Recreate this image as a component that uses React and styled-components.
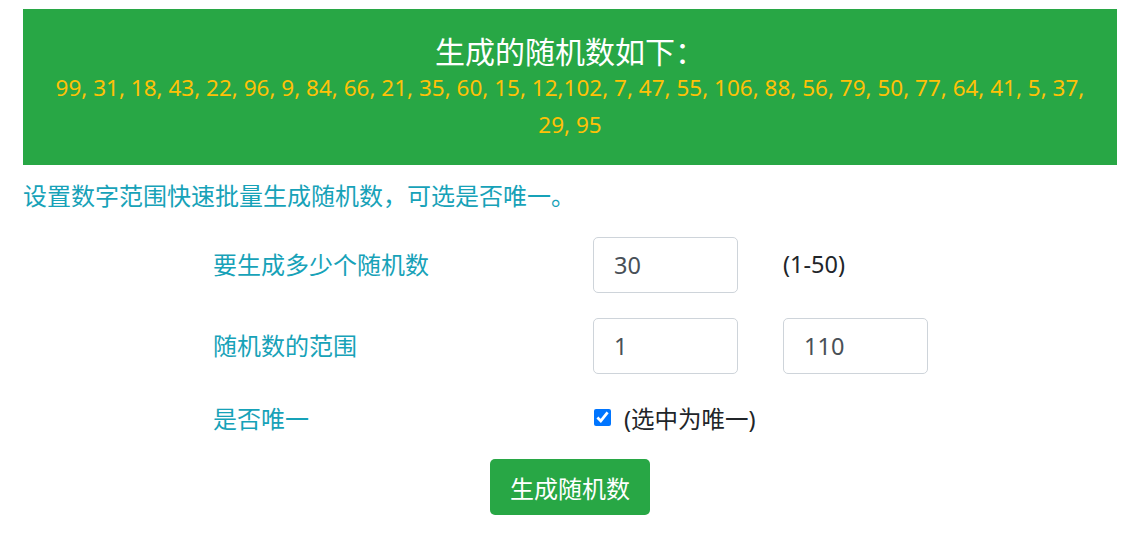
import React, { useState } from 'react';
import styled, { createGlobalStyle } from 'styled-components';

const GlobalStyle = createGlobalStyle`
  body {
    margin: 0;
    background: #fff;
    font-family: "Noto Sans", "Noto Sans CJK SC", sans-serif;
    color: #212529;
  }
`;

const Page = styled.div`
  padding: 9px 13px 20px 23px;
`;

const Banner = styled.div`
  background-color: #28a745;
  padding: 26px 30px 22px;
  text-align: center;
`;

const BannerTitle = styled.h3`
  margin: 0;
  font-size: 30px;
  font-weight: 400;
  line-height: 34px;
  color: #fff;
`;

const Numbers = styled.div`
  font-size: 22.5px;
  line-height: 37px;
  color: #ffc107;
`;

const Intro = styled.p`
  margin: 14px 0 24px;
  font-size: 24px;
  line-height: 34px;
  color: #17a2b8;
`;

const Form = styled.form`
  display: grid;
  grid-template-columns: 380px 190px 190px;
  grid-template-rows: 56px 56px 37px;
  row-gap: 25px;
  padding-left: 190px;
  align-items: center;
`;

const Label = styled.label`
  font-size: 24px;
  line-height: 34px;
  color: #17a2b8;
  align-self: ${(p) => (p.$bottom ? 'end' : 'center')};
`;

const Input = styled.input`
  box-sizing: border-box;
  width: 145px;
  height: 56px;
  padding: 0 20px;
  font-family: inherit;
  font-size: 23.5px;
  color: #495057;
  border: 1px solid #ced4da;
  border-radius: 5px;
  outline: none;
`;

const Hint = styled.span`
  font-size: 23.5px;
  line-height: 30px;
  margin-top: -3px;
`;

const CheckCell = styled.div`
  grid-column: span 2;
  align-self: end;
  display: flex;
  align-items: center;
  gap: 13px;
  font-size: 23.5px;
  line-height: 34px;
`;

const Check = styled.input`
  width: 17px;
  height: 17px;
  margin: -3px 0 0 1px;
  accent-color: #0075ff;
`;

const Actions = styled.div`
  display: flex;
  justify-content: center;
  margin-top: 23px;
`;

const Button = styled.button`
  height: 56px;
  padding: 0 20px;
  border: none;
  border-radius: 5px;
  background-color: #28a745;
  color: #fff;
  font-family: inherit;
  font-size: 24px;
  cursor: pointer;
`;

const nums = [99, 31, 18, 43, 22, 96, 9, 84, 66, 21, 35, 60, 15, '12,102', 7, 47, 55, 106, 88, 56, 79, 50, 77, 64, 41, 5, 37, 29, 95];

export default function App() {
  const [count, setCount] = useState('30');
  const [min, setMin] = useState('1');
  const [max, setMax] = useState('110');
  const [unique, setUnique] = useState(true);

  return (
    <Page>
      <GlobalStyle />
      <Banner>
        <BannerTitle>生成的随机数如下：</BannerTitle>
        <Numbers>{nums.join(', ')}</Numbers>
      </Banner>
      <Intro>设置数字范围快速批量生成随机数，可选是否唯一。</Intro>
      <Form onSubmit={(e) => e.preventDefault()}>
        <Label>要生成多少个随机数</Label>
        <Input value={count} onChange={(e) => setCount(e.target.value)} />
        <Hint>(1-50)</Hint>

        <Label>随机数的范围</Label>
        <Input value={min} onChange={(e) => setMin(e.target.value)} />
        <Input value={max} onChange={(e) => setMax(e.target.value)} />

        <Label $bottom>是否唯一</Label>
        <CheckCell>
          <Check type="checkbox" checked={unique} onChange={(e) => setUnique(e.target.checked)} />
          <span>(选中为唯一)</span>
        </CheckCell>
      </Form>
      <Actions>
        <Button type="button">生成随机数</Button>
      </Actions>
    </Page>
  );
}
